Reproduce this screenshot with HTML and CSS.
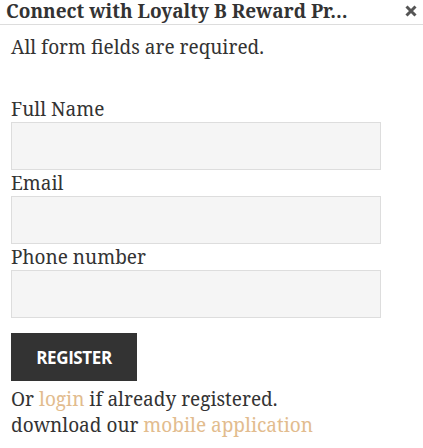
FILE: index.html
```html
<!DOCTYPE html>
<html>
<head>
<meta charset="utf-8">
<link rel="stylesheet" href="styles.css">
</head>
<body>
<div class="dialog">
  <div class="titlebar">
    <span class="title">Connect with Loyalty B Reward Pr…</span>
    <svg class="close" width="12" height="12" viewBox="0 0 12 12"><path d="M1.5 1.5L10.5 10.5M10.5 1.5L1.5 10.5" stroke="#555" stroke-width="3" stroke-linecap="butt"/></svg>
  </div>
  <div class="content">
    <p class="note">All form fields are required.</p>
    <form class="form">
      <label class="label">Full Name</label>
      <input class="field" type="text">
      <label class="label">Email</label>
      <input class="field" type="text">
      <label class="label">Phone number</label>
      <input class="field" type="text">
      <button class="btn" type="button">REGISTER</button>
    </form>
    <p class="foot">Or <a class="link" href="#">login</a> if already registered.<br>download our <a class="link" href="#">mobile application</a></p>
  </div>
</div>
</body>
</html>
```
FILE: styles.css
```css
html, body { margin: 0; padding: 0; background: #fff; }
body { font-family: "Noto Serif", "DejaVu Serif", serif; color: #333; }
.dialog { width: 423px; }
.titlebar {
  display: flex; align-items: center; justify-content: space-between;
  height: 25px; border-bottom: 1px solid #ddd; padding: 0 6px 2px 6px;
  box-sizing: border-box;
}
.title {
  font-weight: bold; font-size: 19px; white-space: nowrap; line-height: 24px; color: #333;
}
.close { display: block; }
.content { padding: 0 11px; }
.note { margin: 9px 0 0; font-size: 19px; line-height: 26px; }
.form { display: flex; flex-direction: column; align-items: flex-start; margin-top: 36px; }
.label { font-size: 19px; line-height: 26px; }
.field {
  width: 370px; height: 48px; box-sizing: border-box; margin: 0;
  border: 1px solid #ddd; background: #f5f5f5;
}
.btn {
  margin-top: 15px; width: 126px; height: 48px; border: 0; background: #333; color: #fff;
  font-family: "Open Sans", sans-serif; font-weight: bold; font-size: 17px; letter-spacing: -0.4px;
}
.foot { margin: 5px 0 0; font-size: 19px; line-height: 26px; }
.link { color: #e2bc8e; text-decoration: none; }
```
